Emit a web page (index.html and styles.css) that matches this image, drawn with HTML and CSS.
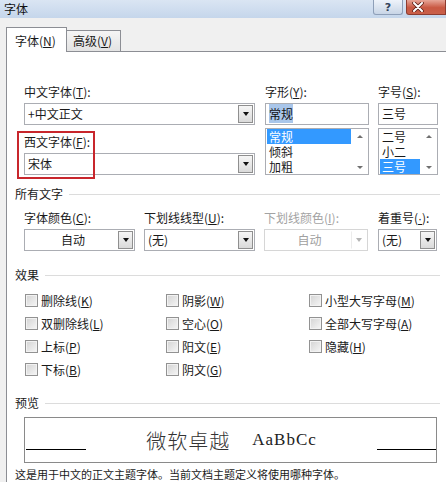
FILE: index.html
```html
<!DOCTYPE html>
<html lang="zh-CN">
<head>
<meta charset="utf-8">
<title>字体</title>
<link rel="stylesheet" href="styles.css">
</head>
<body>
<div class="dialog">
  <div class="titlebar">
    <span class="title">字体</span>
    <span class="tb-btn help">?</span>
    <span class="tb-btn close">
      <svg width="14" height="10" viewBox="0 0 14 10"><path d="M3 1 L11 9 M11 1 L3 9" stroke="#5a2018" stroke-width="3.6" stroke-linecap="round"/><path d="M3 1 L11 9 M11 1 L3 9" stroke="#fff" stroke-width="2" stroke-linecap="round"/></svg>
    </span>
  </div>
  <div class="tabs">
    <div class="tab active">字体(<u>N</u>)</div>
    <div class="tab">高级(<u>V</u>)</div>
  </div>
  <div class="panel">
    <div class="top">
      <div class="col col-a">
        <div class="flabel">中文字体(<u>T</u>):</div>
        <div class="combo"><span class="ctext">+中文正文</span><span class="drop"><i class="tri"></i></span></div>
        <div class="flabel second">西文字体(<u>F</u>):</div>
        <div class="combo"><span class="ctext">宋体</span><span class="drop"><i class="tri"></i></span></div>
        <div class="redbox"></div>
      </div>
      <div class="col col-b">
        <div class="flabel">字形(<u>Y</u>):</div>
        <div class="input"><span class="sel-text">常规</span></div>
        <div class="list">
          <div class="items">
            <div class="item selected">常规</div>
            <div class="item">倾斜</div>
            <div class="item">加粗</div>
          </div>
          <div class="sbar"><i class="up"></i><i class="down"></i></div>
        </div>
      </div>
      <div class="col col-c">
        <div class="flabel">字号(<u>S</u>):</div>
        <div class="input">三号</div>
        <div class="list">
          <div class="items">
            <div class="item">二号</div>
            <div class="item">小二</div>
            <div class="item selected">三号</div>
          </div>
          <div class="sbar"><i class="up"></i><i class="down"></i></div>
        </div>
      </div>
    </div>

    <div class="section">所有文字<span class="rule"></span></div>
    <div class="row2">
      <div class="col w1">
        <div class="flabel">字体颜色(<u>C</u>):</div>
        <div class="combo"><span class="ctext center">自动</span><span class="drop"><i class="tri"></i></span></div>
      </div>
      <div class="col w2">
        <div class="flabel">下划线线型(<u>U</u>):</div>
        <div class="combo"><span class="ctext">(无)</span><span class="drop"><i class="tri"></i></span></div>
      </div>
      <div class="col w3">
        <div class="flabel disabled">下划线颜色(<u>I</u>):</div>
        <div class="combo off"><span class="ctext center">自动</span><span class="drop"><i class="tri"></i></span></div>
      </div>
      <div class="col w4">
        <div class="flabel">着重号(<u class="dot">·</u>):</div>
        <div class="combo"><span class="ctext">(无)</span><span class="drop"><i class="tri"></i></span></div>
      </div>
    </div>

    <div class="section fx">效果<span class="rule"></span></div>
    <div class="checks">
      <div class="chk"><i class="box"></i>删除线(<u>K</u>)</div>
      <div class="chk"><i class="box"></i>阴影(<u>W</u>)</div>
      <div class="chk"><i class="box"></i>小型大写字母(<u>M</u>)</div>
      <div class="chk"><i class="box"></i>双删除线(<u>L</u>)</div>
      <div class="chk"><i class="box"></i>空心(<u>O</u>)</div>
      <div class="chk"><i class="box"></i>全部大写字母(<u>A</u>)</div>
      <div class="chk"><i class="box"></i>上标(<u>P</u>)</div>
      <div class="chk"><i class="box"></i>阳文(<u>E</u>)</div>
      <div class="chk"><i class="box"></i>隐藏(<u>H</u>)</div>
      <div class="chk"><i class="box"></i>下标(<u>B</u>)</div>
      <div class="chk"><i class="box"></i>阴文(<u>G</u>)</div>
    </div>

    <div class="section pv">预览<span class="rule"></span></div>
    <div class="preview">
      <span class="uline left"></span>
      <div class="sample"><span class="cjk">微软卓越</span><span class="lat">AaBbCc</span></div>
      <span class="uline right"></span>
    </div>
    <div class="desc">这是用于中文的正文主题字体。当前文档主题定义将使用哪种字体。</div>
  </div>
</div>
</body>
</html>
```

FILE: styles.css
```css
* { box-sizing: border-box; }
html, body { margin: 0; padding: 0; }
body {
  width: 446px;
  height: 482px;
  overflow: hidden;
  background: #f0f0f0;
  font-family: "Noto Sans CJK SC", "Microsoft YaHei", sans-serif;
  font-size: 12px;
  color: #1a1a1a;
}
u { text-decoration: underline; text-underline-offset: 1px; }
u.dot { font-family: "Liberation Sans", sans-serif; }

.dialog { width: 446px; height: 482px; display: flex; flex-direction: column; }

.titlebar {
  height: 18px;
  flex: none;
  display: flex;
  align-items: flex-start;
  overflow: hidden;
  background: linear-gradient(#dae5f3, #c5d6eb);
}
.title { padding-left: 4px; line-height: 17px; font-size: 12px; color: #111; }
.tb-btn {
  flex: none;
  height: 15px;
  display: flex;
  align-items: center;
  justify-content: center;
  border-radius: 0 0 3px 3px;
}
.help {
  margin-left: auto;
  width: 30px;
  border: 1px solid #8e9fb8;
  border-top: none;
  background: linear-gradient(#eef3fa, #c8d5e6);
  color: #33435c;
  font-family: "DejaVu Sans", sans-serif;
  font-weight: bold;
  font-size: 11px;
  line-height: 13px;
}
.close {
  margin-left: 3px;
  width: 40px;
  border: 1px solid #8d3c30;
  border-top: none;
  border-radius: 0 0 0 3px;
  background: linear-gradient(#e7a698, #c95842 55%, #c9604a);
  justify-content: flex-start;
  padding-left: 4px;
}

.tabs {
  margin-top: 9px;
  height: 24px;
  flex: none;
  display: flex;
  align-items: flex-end;
  padding-left: 6px;
  position: relative;
  z-index: 1;
}
.tab {
  height: 21px;
  padding: 0 6px;
  border: 1px solid #8c8e94;
  border-bottom: none;
  border-left: none;
  background: linear-gradient(#f5f5f5, #e3e3e3);
  line-height: 20px;
  width: 54px;
  color: #1a1a1a;
}
.tab.active {
  height: 25px;
  width: 61px;
  margin-bottom: -1px;
  border-left: 1px solid #8c8e94;
  background: #fff;
  padding-left: 8px;
  line-height: 25px;
}

.panel {
  flex: 1;
  margin-left: 6px;
  border-top: 1px solid #8c8e94;
  border-left: 1px solid #8c8e94;
  background: #fff;
  padding: 33px 6px 0 8px;
}

.top { display: flex; padding-left: 9px; }
.col { display: flex; flex-direction: column; position: relative; }
.col-a { width: 231px; margin-right: 10px; }
.col-b { width: 104px; margin-right: 9px; }
.col-c { width: 60px; }

.flabel { height: 14px; line-height: 14px; margin-bottom: 4px; white-space: nowrap; }
.flabel.second { margin-top: 10px; }
.flabel.disabled { color: #a3a3a3; }

.combo {
  height: 22px;
  border: 1px solid #abadb3;
  background: #fff;
  display: flex;
  align-items: center;
  padding: 0 1px 0 3px;
}
.ctext { flex: 1; line-height: 20px; white-space: nowrap; }
.ctext.center { text-align: center; }
.drop {
  flex: none;
  width: 15px;
  height: 18px;
  border: 1px solid #8f8f8f;
  background: linear-gradient(#f6f6f6, #dadada);
  display: flex;
  align-items: center;
  justify-content: center;
}
.tri {
  display: block;
  width: 0; height: 0;
  border-left: 3.5px solid transparent;
  border-right: 3.5px solid transparent;
  border-top: 4px solid #111;
}
.combo.off { border-color: #d6d6d6; color: #a0a0a0; }
.combo.off .drop { border-color: transparent; border-left: 1px solid #ececec; background: #fff; }
.combo.off .tri { border-top-color: #b5b5b5; }

.redbox {
  position: absolute;
  left: -7px;
  top: 46px;
  width: 78px;
  height: 48px;
  border: 2px solid #c8262c;
}

.input {
  height: 22px;
  border: 1px solid #abadb3;
  padding: 0 3px;
  line-height: 20px;
  white-space: nowrap;
}
.sel-text { background: #a9c6ea; color: #111; padding: 1px 0; }

.list {
  margin-top: 3px;
  height: 47px;
  border: 1px solid #abadb3;
  display: flex;
}
.items { flex: 1; padding: 0 0 0 1px; }
.item { height: 15px; line-height: 15px; padding-left: 2px; white-space: nowrap; overflow: hidden; }
.item.selected { background: #3399ff; color: #fff; }
.sbar {
  width: 17px;
  flex: none;
  display: flex;
  flex-direction: column;
  justify-content: space-between;
  align-items: center;
  padding: 6px 0 5px;
}
.sbar i { display: block; width: 0; height: 0; border-left: 3px solid transparent; border-right: 3px solid transparent; }
.sbar .up { border-bottom: 3px solid #707070; }
.sbar .down { border-top: 3px solid #707070; }

.section {
  margin-top: 12px;
  height: 14px;
  line-height: 14px;
  display: flex;
  align-items: center;
  white-space: nowrap;
}
.section .rule { flex: 1; height: 0; border-top: 1px solid #dcdcdc; margin-left: 6px; }
.section.fx { margin-top: 17px; }
.section.pv { margin-top: 15px; }

.row2 { display: flex; padding-left: 9px; margin-top: 10px; }
.w1 { width: 111px; margin-right: 9px; }
.w2 { width: 111px; margin-right: 9px; }
.w3 { width: 104px; margin-right: 10px; }
.w4 { width: 59px; }

.checks {
  display: grid;
  grid-template-columns: 141px 143px auto;
  grid-auto-rows: 23px;
  padding-left: 10px;
  margin-top: 7px;
}
.chk { display: flex; align-items: center; white-space: nowrap; }
.box {
  display: block;
  width: 13px;
  height: 13px;
  margin-right: 3px;
  border: 1px solid #929292;
  background: linear-gradient(135deg, #d3d3d3, #f6f6f6);
  box-shadow: inset 0 0 0 1px #f2f2f2;
}

.preview {
  margin: 7px 0 0 9px;
  width: 413px;
  height: 46px;
  border: 1px solid #8a8a8a;
  display: flex;
}
.uline { flex: none; align-self: flex-end; height: 1px; background: #000; margin-bottom: 12px; }
.uline.left { width: 60px; margin-left: 1px; }
.uline.right { width: 59px; }
.sample {
  flex: 1;
  display: flex;
  align-items: center;
  justify-content: center;
  gap: 22px;
  color: #333;
}
.cjk { font-family: "Noto Sans CJK SC", sans-serif; font-size: 20px; font-weight: 300; letter-spacing: 1px; }
.lat { font-family: "Liberation Serif", serif; font-size: 17px; letter-spacing: 1px; color: #222; }

.desc {
  margin-top: 4px;
  height: 14px;
  line-height: 14px;
  font-size: 11px;
  white-space: nowrap;
}
```
